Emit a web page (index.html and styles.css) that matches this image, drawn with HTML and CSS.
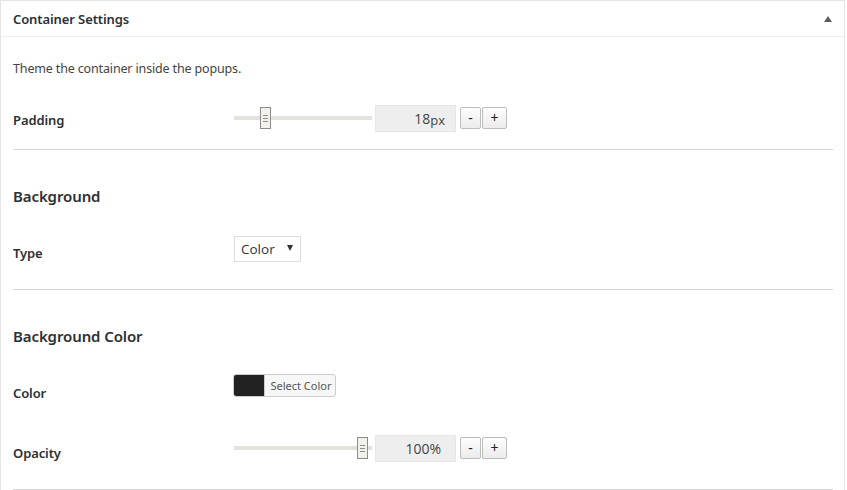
FILE: index.html
```html
<!DOCTYPE html>
<html>
<head>
<meta charset="utf-8">
<link rel="stylesheet" href="styles.css">
</head>
<body>
<div class="box">
  <div class="box-head">
    <span class="box-title">Container Settings</span>
    <span class="toggle"></span>
  </div>
  <div class="box-body">
    <p class="desc">Theme the container inside the popups.</p>
    <div class="row row-padding">
      <div class="label">Padding</div>
      <div class="control">
        <div class="slider"><div class="track"></div><div class="thumb" style="left:26px"><i></i><i></i><i></i></div></div>
        <div class="num"><span class="val">18</span><span class="unit">px</span></div>
        <div class="btns"><button class="btn minus">-</button><button class="btn plus">+</button></div>
      </div>
    </div>
    <div class="sep"></div>
    <h3 class="heading">Background</h3>
    <div class="row row-type">
      <div class="label">Type</div>
      <div class="control">
        <div class="select"><span>Color</span><span class="caret"></span></div>
      </div>
    </div>
    <div class="sep"></div>
    <h3 class="heading">Background Color</h3>
    <div class="row row-color">
      <div class="label">Color</div>
      <div class="control">
        <div class="colorbtn"><span class="swatch"></span><span class="ctext">Select Color</span></div>
      </div>
    </div>
    <div class="row row-opacity">
      <div class="label">Opacity</div>
      <div class="control">
        <div class="slider"><div class="track"></div><div class="thumb" style="left:123px"><i></i><i></i><i></i></div></div>
        <div class="num"><span class="val">100%</span></div>
        <div class="btns"><button class="btn minus">-</button><button class="btn plus">+</button></div>
      </div>
    </div>
    <div class="sep last"></div>
  </div>
</div>
</body>
</html>
```
FILE: styles.css
```css
html, body {
  margin: 0;
  padding: 0;
  background: #ffffff;
}
body {
  font-family: "Noto Sans", "Open Sans", sans-serif;
  color: #23282d;
  font-size: 13px;
  width: 847px;
  height: 490px;
  overflow: hidden;
}
.box {
  width: 845px;
  border-left: 1px solid #e5e5e5;
  border-right: 1px solid #e5e5e5;
  border-top: 1px solid #e5e5e5;
  box-sizing: border-box;
  background: #fff;
}
.box-head {
  height: 36px;
  border-bottom: 1px solid #eeeeee;
  display: flex;
  align-items: center;
  justify-content: space-between;
  padding: 0 12px 0 12px;
  box-sizing: border-box;
}
.box-title {
  font-weight: 600;
  font-size: 13px;
  color: #2b3035;
  letter-spacing: -0.1px;
}
.toggle {
  width: 0;
  height: 0;
  border-left: 4px solid transparent;
  border-right: 4px solid transparent;
  border-bottom: 6px solid #5a5f64;
}
.box-body {
  padding: 0 11px 0 12px;
}
.desc {
  margin: 0;
  padding-top: 23px;
  height: 40px;
  line-height: 18px;
  font-size: 12.5px;
  color: #444;
  letter-spacing: -0.15px;
}
.row {
  display: flex;
  align-items: center;
}
.label {
  width: 221px;
  font-weight: 600;
  font-size: 13px;
  color: #2b3035;
  letter-spacing: -0.1px;
}
.control {
  display: flex;
  align-items: center;
}
.row-padding {
  height: 56px;
  margin-top: -12px;
  margin-bottom: 3px;
  padding-top: 2px;
}
.row-padding .label {
  padding-top: 4px;
}
.slider {
  position: relative;
  width: 138px;
  height: 22px;
  margin-right: 3px;
}
.track {
  position: absolute;
  left: 0;
  right: 0;
  top: 9px;
  height: 4px;
  background: #e4e2dd;
}
.thumb {
  position: absolute;
  top: 0;
  width: 9px;
  height: 20px;
  border: 1px solid #8c8c8c;
  background: #f3f1ec;
  display: flex;
  flex-direction: column;
  justify-content: center;
  align-items: center;
  gap: 2px;
}
.thumb i {
  display: block;
  width: 5px;
  height: 1px;
  background: #8c8c8c;
}
.num {
  width: 81px;
  height: 27px;
  background: #eeeeee;
  border: 1px solid #e6e6e6;
  box-sizing: border-box;
  display: flex;
  align-items: center;
  justify-content: flex-end;
  padding-right: 10px;
  font-family: "Open Sans", "Noto Sans", sans-serif;
  color: #444;
}
.val {
  font-size: 14px;
}
.unit {
  font-size: 13px;
  margin-top: 4px;
}
.row-opacity .num {
  padding-right: 14px;
}
.btns {
  display: flex;
  margin-left: 4px;
}
.btn {
  height: 22px;
  padding: 0;
  border: 1px solid #bdbdbd;
  border-radius: 2px;
  background: linear-gradient(#fdfdfd, #ececec);
  font-family: "Noto Sans", sans-serif;
  font-size: 14px;
  color: #222;
  line-height: 18px;
}
.btn.minus { width: 21px; margin-right: 1px; }
.btn.plus { width: 25px; }
.sep {
  height: 1px;
  background: #d5d5d5;
}
.heading {
  margin: 0;
  padding-top: 35px;
  height: 22px;
  line-height: 22px;
  font-size: 15px;
  font-weight: 600;
  color: #2b3035;
  letter-spacing: -0.1px;
}
.row-type {
  height: 80px;
  margin-top: 2px;
}
.row-type .label { padding-top: 8px; }
.select {
  width: 67px;
  height: 26px;
  border: 1px solid #dddddd;
  box-sizing: border-box;
  display: flex;
  align-items: center;
  justify-content: space-between;
  padding: 0 7px 0 6px;
  font-size: 13.5px;
  color: #333;
  font-family: "Open Sans", "Noto Sans", sans-serif;
}
.caret {
  width: 0;
  height: 0;
  border-left: 3.5px solid transparent;
  border-right: 3.5px solid transparent;
  border-top: 6px solid #333;
  margin-top: -2px;
}
.row-color {
  height: 56px;
  margin-top: 10px;
}
.row-color .label { padding-top: 16px; }
.colorbtn {
  display: flex;
  width: 103px;
  height: 23px;
  border: 1px solid #cccccc;
  border-radius: 3px;
  box-sizing: border-box;
  overflow: hidden;
  margin-left: -1px;
  background: #f7f7f7;
}
.swatch {
  width: 30px;
  background: #222222;
  border-right: 1px solid #cccccc;
}
.ctext {
  flex: 1;
  font-size: 11px;
  color: #555;
  display: flex;
  align-items: center;
  justify-content: center;
  padding-left: 2px;
}
.row-opacity {
  height: 56px;
  margin-top: 7px;
}
.row-opacity .label { padding-top: 10px; }
.sep.last {
  margin-top: 13px;
}
```
